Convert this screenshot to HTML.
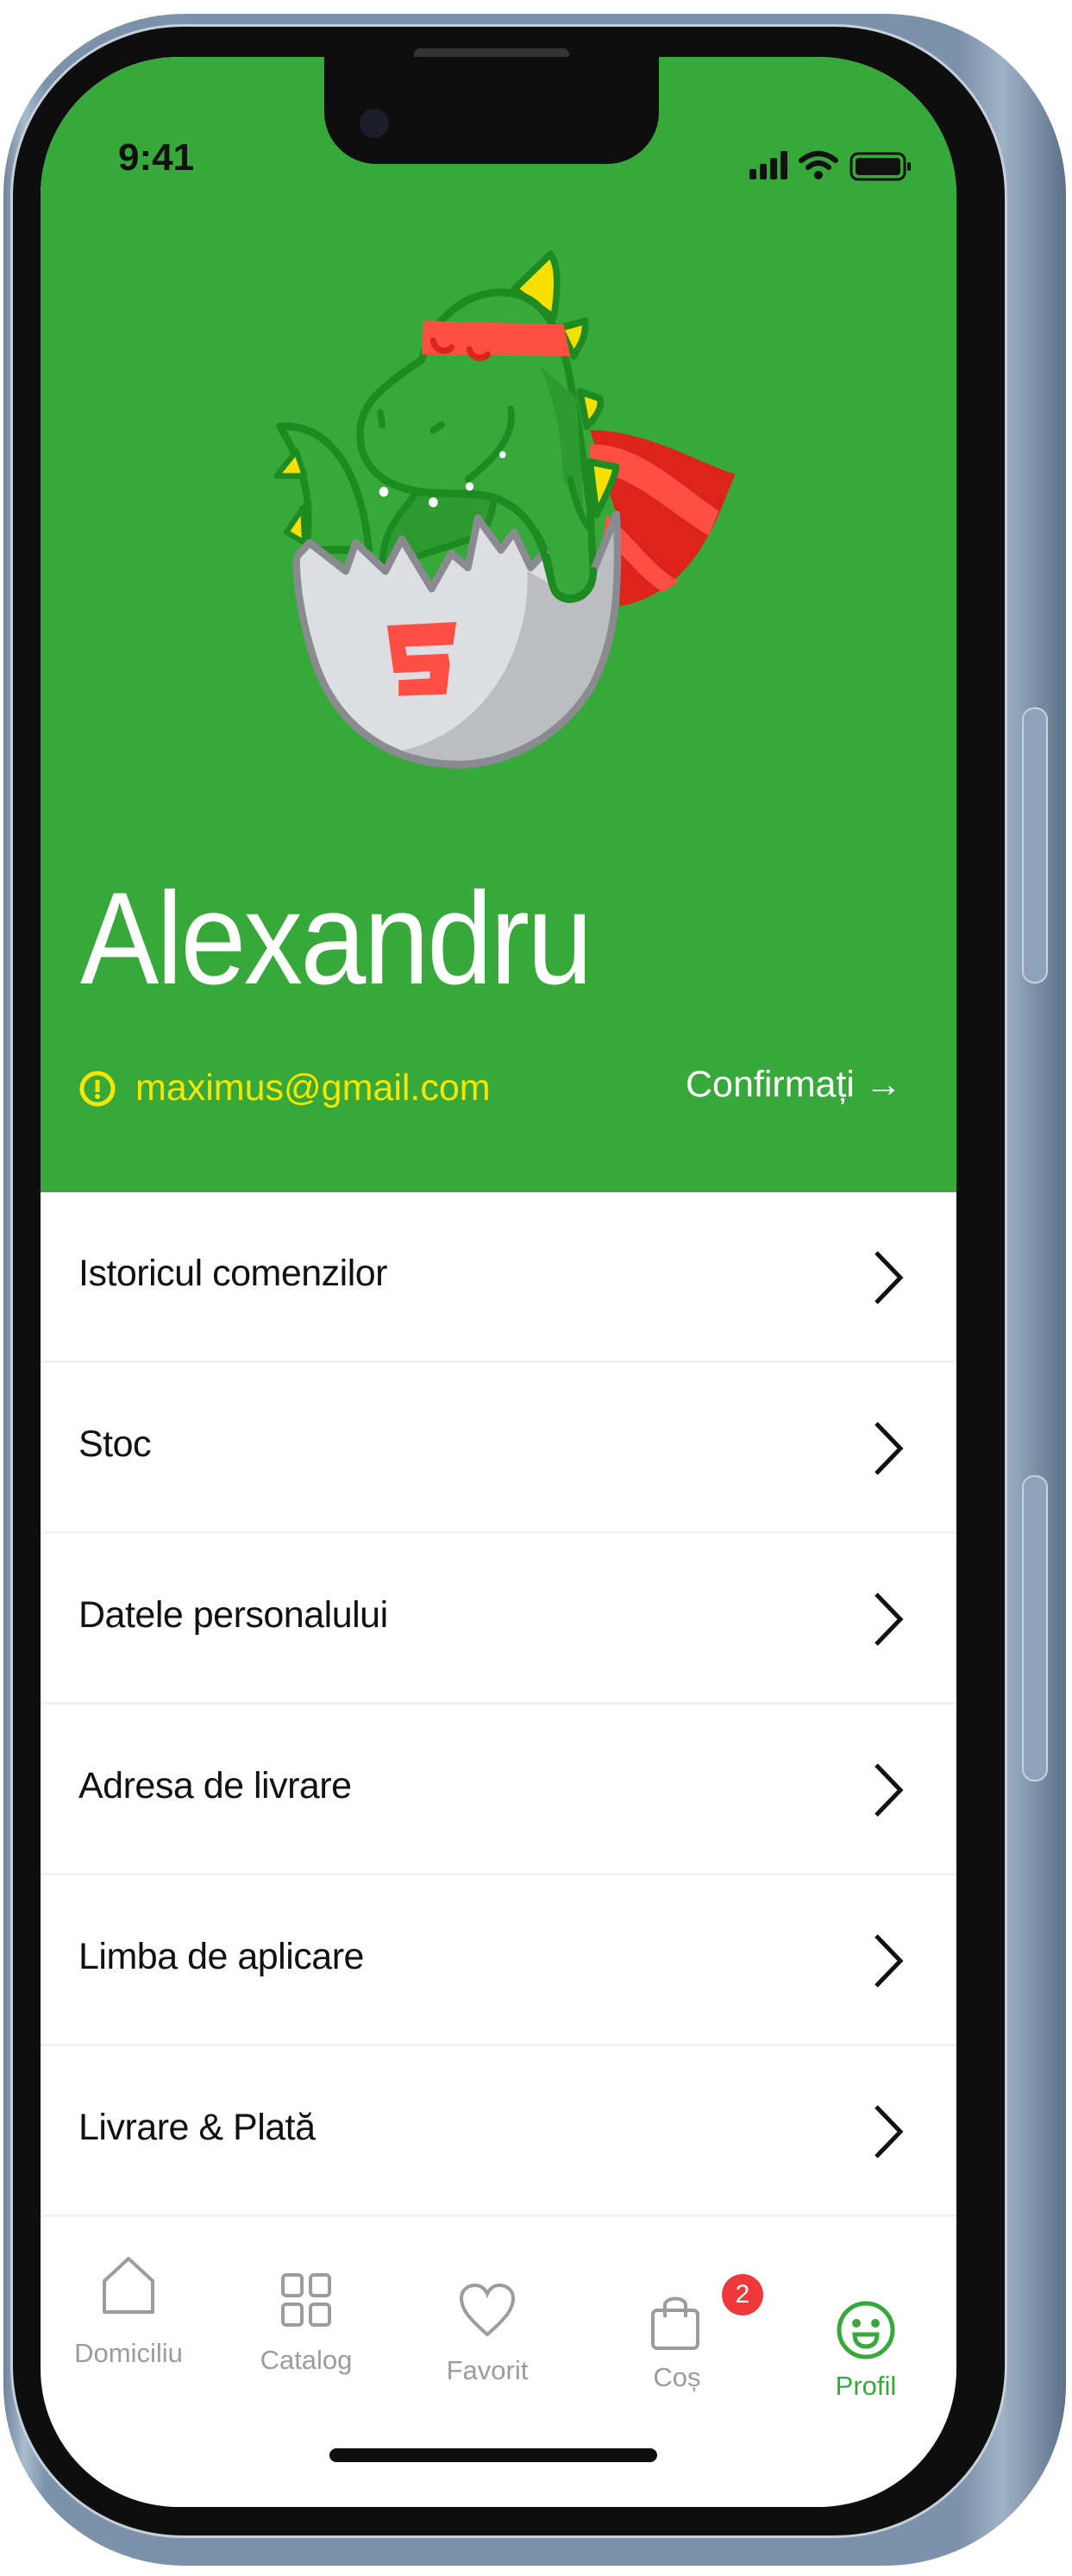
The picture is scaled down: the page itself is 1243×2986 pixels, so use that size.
<!DOCTYPE html>
<html><head><meta charset="utf-8"><style>
*{margin:0;padding:0;box-sizing:border-box}
body{width:1243px;height:2986px;background:#fff;position:relative;overflow:hidden;font-family:"Liberation Sans",sans-serif}
.abs{position:absolute}
.body{left:4px;top:16px;width:1232px;height:2958px;border-radius:210px;background:linear-gradient(90deg,#6f839b 0%,#a9bccd 2%,#7c91aa 4%,#7c91aa 90%,#9fb2c6 94%,#5d718a 100%)}
.bezel{left:12px;top:28px;width:1156px;height:2914px;border-radius:200px;background:#0e0e0e;border:3px solid #c5d0dc}
.screen{left:47px;top:66px;width:1062px;height:2840px;border-radius:160px;background:#fff;overflow:hidden}
.green{left:0;top:0;width:1062px;height:1316px;background:#36a93a}
.notch{left:329px;top:-10px;width:388px;height:134px;background:#0e0e0e;border-radius:0 0 60px 60px}
.row{left:0;width:1062px;height:198px;border-bottom:3px solid #f0f1f3}
.row span{position:absolute;left:44px;top:70px;font-size:43px;color:#111;letter-spacing:-0.5px}
.row svg{position:absolute;left:963px;top:66px}
.lab{position:absolute;font-size:31px;color:#9a9ca2;text-align:center;width:200px}
</style></head><body>
<div class="abs body"></div>
<div class="abs" style="left:1185px;top:820px;width:30px;height:320px;border-radius:14px;background:#8ea3b9;border:2px solid #c8d3de"></div>
<div class="abs" style="left:1185px;top:1710px;width:30px;height:355px;border-radius:14px;background:#8ea3b9;border:2px solid #c8d3de"></div>
<div class="abs bezel"></div>
<div class="abs" style="left:480px;top:56px;width:180px;height:14px;border-radius:7px;background:#333"></div>
<div class="abs screen">
  <div class="abs green"></div>
  <div class="abs notch"></div>
  <div class="abs" style="left:370px;top:60px;width:34px;height:34px;border-radius:50%;background:#1c1c2a"></div>
  <div class="abs" style="left:90px;top:92px;font-size:44px;font-weight:bold;color:#111">9:41</div>
  <svg class="abs" style="left:820px;top:100px" width="200" height="50" viewBox="0 0 200 50">
    <rect x="2" y="30" width="8" height="12" rx="2" fill="#111"/><rect x="14" y="24" width="8" height="18" rx="2" fill="#111"/><rect x="26" y="17" width="8" height="25" rx="2" fill="#111"/><rect x="38" y="9" width="8" height="33" rx="2" fill="#111"/>
    <path d="M62 20 Q82 4 102 20" stroke="#111" stroke-width="6" fill="none" stroke-linecap="round"/><path d="M70 28 Q82 18 94 28" stroke="#111" stroke-width="6" fill="none" stroke-linecap="round"/><circle cx="82" cy="37" r="5" fill="#111"/>
    <rect x="120" y="12" width="62" height="30" rx="8" fill="none" stroke="#111" stroke-width="3"/><rect x="125" y="17" width="52" height="20" rx="4" fill="#111"/><rect x="185" y="22" width="4" height="10" rx="2" fill="#111"/>
  </svg>
  <div class="abs" style="left:46px;top:935px;font-size:152px;color:#fff;letter-spacing:-3px;transform:scaleX(0.9);transform-origin:left">Alexandru</div>
  <svg class="abs" style="left:44px;top:1174px" width="44" height="44"><circle cx="22" cy="22" r="18" fill="none" stroke="#f6e600" stroke-width="5"/><rect x="19.5" y="12" width="5" height="14" fill="#f6e600"/><circle cx="22" cy="31" r="3" fill="#f6e600"/></svg>
  <div class="abs" style="left:110px;top:1171px;font-size:43px;color:#f6e600">maximus@gmail.com</div>
  <div class="abs" style="left:748px;top:1167px;font-size:43px;color:#fff">Confirmați →</div>

  <div class="abs row" style="top:1316px"><span>Istoricul comenzilor</span><svg width="40" height="66"><path d="M6 4 L34 33 L6 62" stroke="#111" stroke-width="5" fill="none"/></svg></div>
  <div class="abs row" style="top:1514px"><span>Stoc</span><svg width="40" height="66"><path d="M6 4 L34 33 L6 62" stroke="#111" stroke-width="5" fill="none"/></svg></div>
  <div class="abs row" style="top:1712px"><span>Datele personalului</span><svg width="40" height="66"><path d="M6 4 L34 33 L6 62" stroke="#111" stroke-width="5" fill="none"/></svg></div>
  <div class="abs row" style="top:1910px"><span>Adresa de livrare</span><svg width="40" height="66"><path d="M6 4 L34 33 L6 62" stroke="#111" stroke-width="5" fill="none"/></svg></div>
  <div class="abs row" style="top:2108px"><span>Limba de aplicare</span><svg width="40" height="66"><path d="M6 4 L34 33 L6 62" stroke="#111" stroke-width="5" fill="none"/></svg></div>
  <div class="abs row" style="top:2306px"><span>Livrare &amp; Plată</span><svg width="40" height="66"><path d="M6 4 L34 33 L6 62" stroke="#111" stroke-width="5" fill="none"/></svg></div>

  <svg class="abs" style="left:70px;top:2548px" width="64" height="70"><path d="M4 30 L32 4 L60 30 L60 66 L4 66 Z" fill="none" stroke="#9a9ca2" stroke-width="4" stroke-linejoin="round"/></svg>
  <div class="lab" style="left:2px;top:2644px">Domiciliu</div>
  <svg class="abs" style="left:278px;top:2568px" width="60" height="64" stroke="#9a9ca2" stroke-width="4" fill="none"><rect x="3" y="3" width="22" height="24" rx="4"/><rect x="35" y="3" width="22" height="24" rx="4"/><rect x="3" y="37" width="22" height="24" rx="4"/><rect x="35" y="37" width="22" height="24" rx="4"/></svg>
  <div class="lab" style="left:208px;top:2652px">Catalog</div>
  <svg class="abs" style="left:485px;top:2580px" width="66" height="64"><path d="M33 60 C10 40 3 30 3 18 C3 8 11 3 19 3 C26 3 31 8 33 13 C35 8 40 3 47 3 C55 3 63 8 63 18 C63 30 56 40 33 60 Z" fill="none" stroke="#9a9ca2" stroke-width="4"/></svg>
  <div class="lab" style="left:418px;top:2664px">Favorit</div>
  <svg class="abs" style="left:706px;top:2590px" width="60" height="70" fill="none" stroke="#9a9ca2" stroke-width="4"><rect x="4" y="22" width="52" height="44" rx="5"/><path d="M18 30 V16 C18 6 42 6 42 16 V30"/></svg>
  <div class="abs" style="left:790px;top:2570px;width:48px;height:48px;border-radius:50%;background:#f0383a;color:#fff;font-size:30px;text-align:center;line-height:48px">2</div>
  <div class="lab" style="left:638px;top:2672px">Coș</div>
  <svg class="abs" style="left:922px;top:2600px" width="70" height="70" fill="none" stroke="#36a93a" stroke-width="5"><circle cx="35" cy="35" r="31"/><circle cx="24" cy="27" r="2.5" fill="#36a93a"/><circle cx="46" cy="27" r="2.5" fill="#36a93a"/><path d="M22 40 H48 C48 50 42 54 35 54 C28 54 22 50 22 40 Z"/></svg>
  <div class="lab" style="left:857px;top:2682px;color:#36a93a">Profil</div>
  <div class="abs" style="left:335px;top:2772px;width:380px;height:16px;border-radius:8px;background:#0e0e0e"></div>
</div>

<svg class="abs" style="left:290px;top:270px" width="600" height="640" viewBox="0 0 1568 1568" preserveAspectRatio="none">
  <path d="M1030 560 C1200 560 1350 650 1470 685 L1420 800 C1350 950 1250 1040 1120 1060 L1110 800 Z" fill="#dc241c"/>
  <path d="M1030 600 C1180 600 1280 700 1420 790 L1390 860 C1250 780 1150 680 1030 680 Z" fill="#ff4f44"/>
  <path d="M1080 800 C1150 850 1220 950 1300 990 L1250 1020 C1180 980 1120 900 1070 860 Z" fill="#ff4f44"/>
  <path d="M90 550 C200 540 330 620 360 900 L170 900 C180 800 190 700 90 550 Z" fill="#36a93a" stroke="#1e8a22" stroke-width="22" stroke-linejoin="round"/>
  <path d="M80 690 L140 620 L165 690 Z M110 850 L160 780 L165 880 Z" fill="#f6e000" stroke="#1e8a22" stroke-width="16" stroke-linejoin="round"/>
  <path d="M400 950 C400 830 470 790 500 740 L720 700 C760 760 720 830 700 860 Z" fill="#2e9a32" stroke="#1e8a22" stroke-width="20"/>
  <path d="M800 160 L910 60 C940 100 930 180 920 240 Z" fill="#f6e000" stroke="#1e8a22" stroke-width="20" stroke-linejoin="round"/>
  <path d="M940 270 L1015 250 C1020 290 1000 320 980 350 Z M1000 450 L1060 470 C1070 500 1040 530 1020 550 Z M1030 650 L1110 665 C1100 710 1070 760 1050 800 Z" fill="#f6e000" stroke="#1e8a22" stroke-width="20" stroke-linejoin="round"/>
  <path d="M340 620 C310 500 380 450 520 360 C560 220 680 160 780 170 C900 180 950 300 970 420 C1000 560 1010 650 1030 780 L1040 960 C1040 1050 930 1060 915 1000 C900 900 880 870 850 830 C780 740 700 740 600 740 C450 740 370 700 340 620 Z" fill="#36a93a" stroke="#1e8a22" stroke-width="22" stroke-linejoin="round"/>
  <path d="M880 380 C930 500 940 560 950 700 L1010 790 L990 470 Z" fill="#2e9a32"/>
  <path d="M790 500 C800 560 770 620 660 700 M395 510 L400 545 M555 560 L580 545 M970 700 C990 780 1010 820 1030 840" stroke="#1e8a22" stroke-width="20" fill="none" stroke-linecap="round"/>
  <path d="M525 250 L950 260 L970 350 L520 345 Z" fill="#ff4f44"/>
  <path d="M555 305 C560 340 600 340 610 325 M665 330 C670 360 710 360 720 345" stroke="#dc241c" stroke-width="18" fill="none" stroke-linecap="round"/>
  <path d="M140 920 L180 880 L290 960 L320 880 L410 960 L460 870 L550 1010 L610 910 L660 950 L690 810 L760 900 L800 850 L850 950 L900 900 L920 1010 C950 1060 1040 1050 1040 960 L1110 800 C1120 1000 1110 1150 1040 1280 C950 1430 780 1510 630 1510 C450 1510 260 1420 190 1200 C150 1080 140 990 140 920 Z" fill="#dcdee2"/>
  <path d="M840 960 C850 1200 700 1420 460 1470 C520 1500 580 1510 630 1510 C780 1510 950 1430 1040 1280 C1110 1150 1120 1000 1110 800 L1040 960 C1040 1050 940 1060 915 1000 Z" fill="#bcbdc1"/>
  <path d="M140 920 L180 880 L290 960 L320 880 L410 960 L460 870 L550 1010 L610 910 L660 950 L690 810 L760 900 L800 850 L850 950 L900 900 M1040 960 L1110 800 C1120 1000 1110 1150 1040 1280 C950 1430 780 1510 630 1510 C450 1510 260 1420 190 1200 C150 1080 140 990 140 920" fill="none" stroke="#8a8b90" stroke-width="22" stroke-linejoin="round"/>
  <path d="M850 830 C900 900 900 960 920 1010 C940 1060 1040 1050 1040 960" fill="none" stroke="#1e8a22" stroke-width="22" stroke-linecap="round"/>
  <path d="M415 1115 L625 1105 L615 1170 L470 1175 L475 1200 L600 1195 L605 1225 L595 1310 L450 1315 L450 1270 L545 1265 L545 1245 L435 1250 Z" fill="#ff4f44"/>
  <circle cx="405" cy="735" r="14" fill="#fff"/><circle cx="555" cy="765" r="14" fill="#fff"/><circle cx="665" cy="720" r="12" fill="#fff"/><circle cx="765" cy="630" r="10" fill="#fff"/>
</svg>
</body></html>
